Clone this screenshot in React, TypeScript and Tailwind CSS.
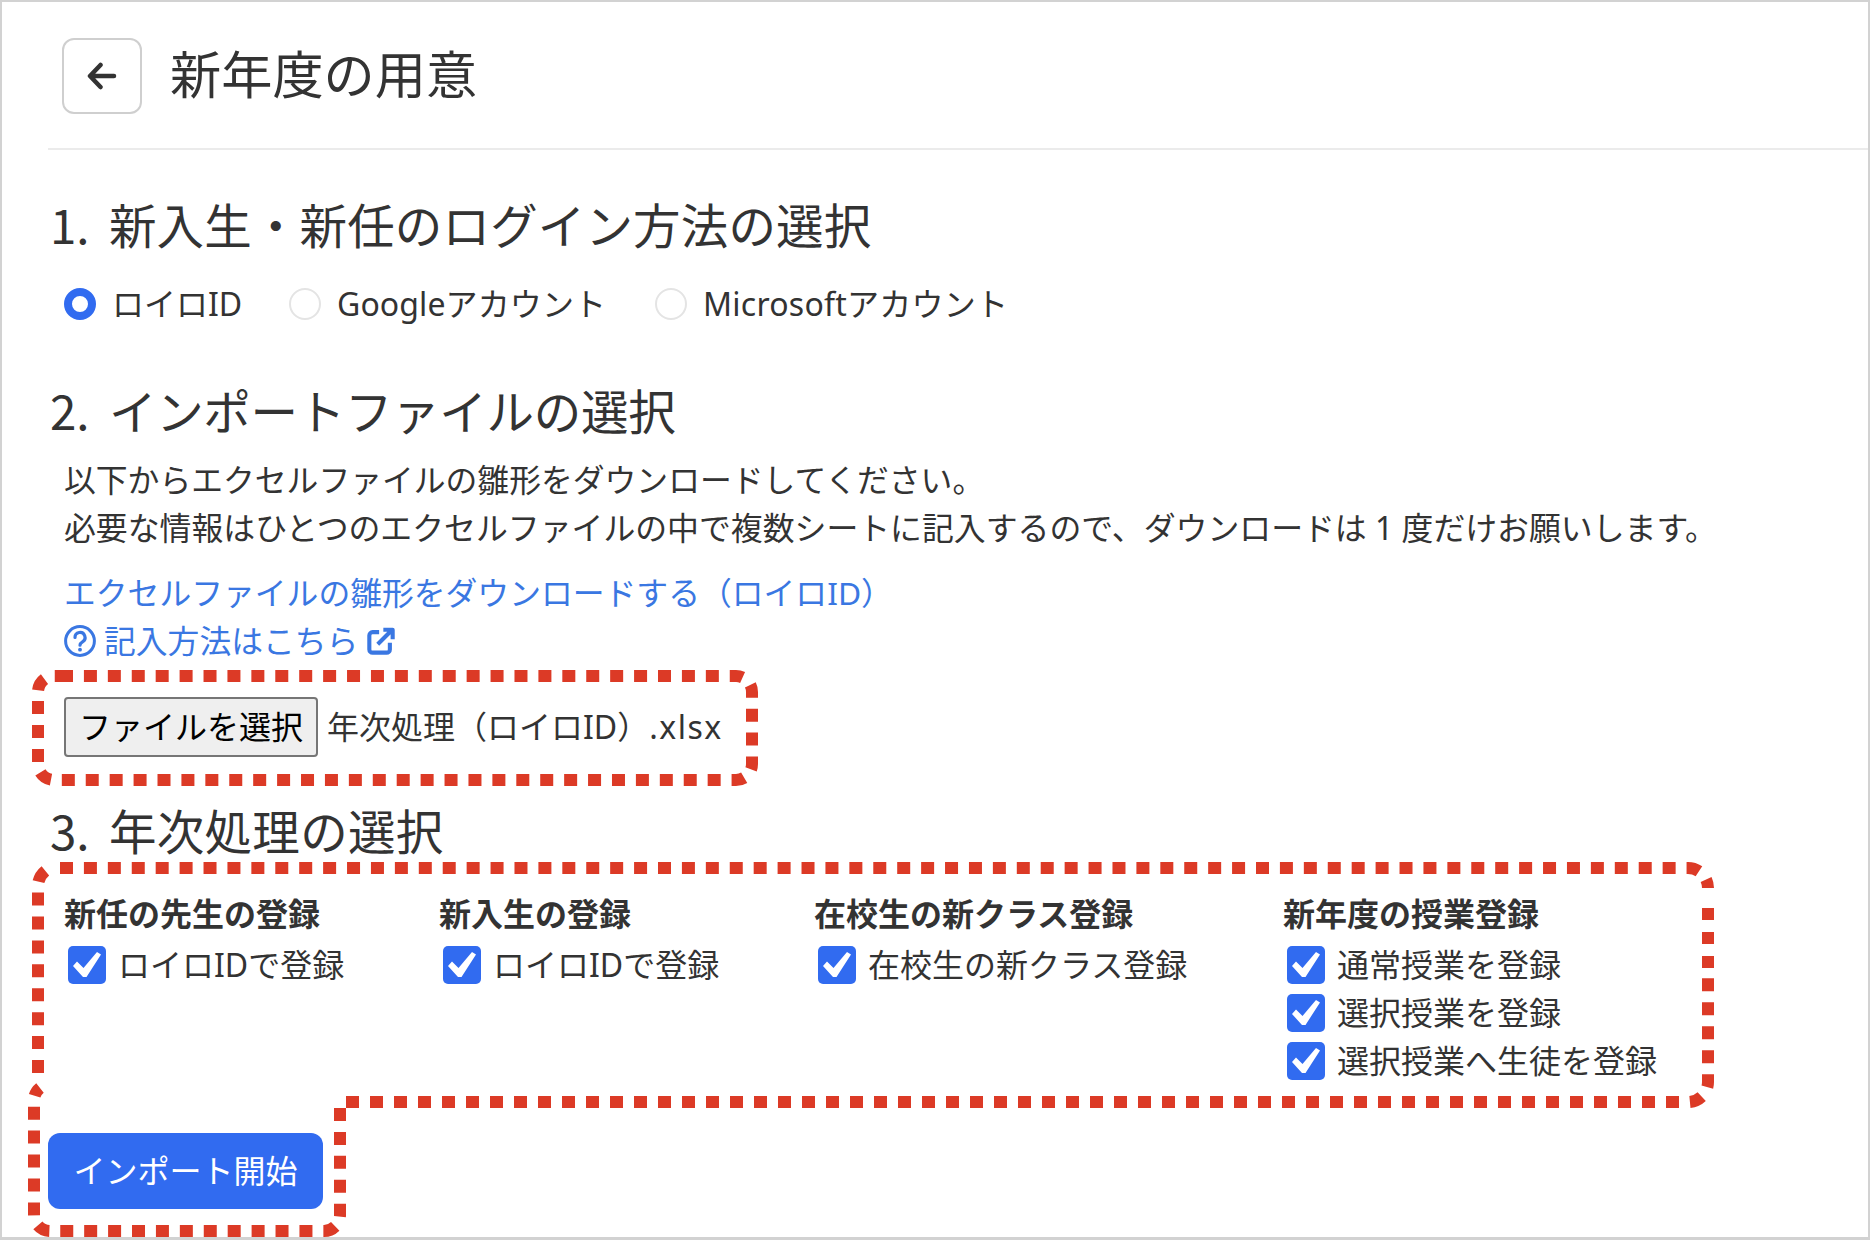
const font = { fontFamily: '"Noto Sans", "Noto Sans CJK JP", sans-serif' };
const numFont = { fontFamily: '"Noto Sans CJK JP", "Noto Sans", sans-serif' };

function Radio({ on, label, className, labelClass }: { on?: boolean; label: string; className: string; labelClass?: string }) {
  return (
    <div className={`flex items-center ${className}`}>
      {on ? (
        <span className="block w-8 h-8 rounded-full border-[8px] border-[#316bf0] bg-white" />
      ) : (
        <span className="block w-8 h-8 rounded-full border-2 border-[#e4e4e4] bg-white" />
      )}
      <span className={`ml-[16px] ${labelClass ?? ""}`}>{label}</span>
    </div>
  );
}

function Check({ label }: { label: string }) {
  return (
    <div className="flex items-center h-12 pl-1">
      <span className="flex items-center justify-center w-[38px] h-[38px] rounded-[5px] bg-[#316bf0]">
        <svg viewBox="0 0 38 38" className="w-[38px] h-[38px]">
          <path d="M5 20 L9 15.5 L15.5 22 L29 6 L33 8.5 L18.5 31 L15 31 Z" fill="#fff" />
        </svg>
      </span>
      <span className="ml-[12px]">{label}</span>
    </div>
  );
}

function Col({ title, items, width }: { title: string; items: string[]; width: string }) {
  return (
    <div className={`shrink-0 ${width}`}>
      <div className="h-12 leading-[48px] font-bold mb-[3px]">{title}</div>
      {items.map((t) => (
        <Check key={t} label={t} />
      ))}
    </div>
  );
}

function Heading({ num, text, className, textClass }: { num: string; text: string; className: string; textClass: string }) {
  return (
    <h2 className={`h-16 text-[47.5px] leading-[60px] ${className}`}>
      <span style={numFont} className="inline-block mr-[7px]">{num}</span> <span className={textClass}>{text}</span>
    </h2>
  );
}

export default function App() {
  return (
    <div
      style={font}
      className="relative w-[1870px] h-[1240px] overflow-hidden bg-white border-2 border-b-[3px] border-[#d2d2d2] text-[32px] text-[#333333]"
    >
      <div className="ml-[46px] pt-[36px] pb-[34px] flex items-center border-b-2 border-[#ebebeb]">
        <button className="ml-[14px] w-[80px] h-[76px] flex items-center justify-center rounded-[12px] border-2 border-[#cfcfcf] bg-white">
          <svg width="30" height="28" viewBox="0 0 30 28" fill="none" stroke="#333" strokeWidth="4.5" strokeLinecap="round" strokeLinejoin="round">
            <path d="M27 14 H3.5 M13.5 3 L3 14 L13.5 25" />
          </svg>
        </button>
        <h1 className="ml-[28px] -mt-[5px] text-[51.2px] leading-[76px]">新年度の用意</h1>
      </div>

      <div className="pl-[48px]">
        <Heading className="mt-[44px]" num="1." text="新入生・新任のログイン方法の選択" textClass="tracking-[0.15px]" />
        <div className="mt-[22px] h-12 flex items-center pl-[14px]">
          <Radio on label="ロイロID" className="w-[225px]" />
          <Radio label="Googleアカウント" className="w-[366px]" labelClass="tracking-[0.1px]" />
          <Radio label="Microsoftアカウント" className="" labelClass="tracking-[0.25px]" />
        </div>

        <Heading className="mt-[52px]" num="2." text="インポートファイルの選択" textClass="tracking-[-0.3px]" />
        <div className="mt-[12px] pl-[14px] leading-[48px] text-[31.8px]">
          <p>以下からエクセルファイルの雛形をダウンロードしてください。</p>
          <p className="text-[31.87px]">必要な情報はひとつのエクセルファイルの中で複数シートに記入するので、ダウンロードは 1 度だけお願いします。</p>
        </div>
        <div className="mt-[17px] pl-[14px] leading-[48px] text-[31.8px] text-[#3a77e2]">
          <p>エクセルファイルの雛形をダウンロードする（ロイロID）</p>
          <p className="flex items-center">
            <svg width="32" height="32" viewBox="0 0 32 32" fill="none" stroke="#3a77e2" strokeWidth="3" strokeLinecap="round" className="shrink-0">
              <circle cx="16" cy="16" r="14.4" />
              <path d="M11 12.5 a5 5 0 1 1 7.5 4.3 c-1.6 1 -2.5 1.8 -2.5 3.4" strokeWidth="3.2" />
              <path d="M16 24.6 v0.1" strokeWidth="3.8" />
            </svg>
            <span className="ml-[8px]">記入方法はこちら</span>
            <svg width="28" height="28" viewBox="0 0 30 30" fill="none" stroke="#3a77e2" strokeWidth="4.4" strokeLinejoin="round" className="ml-[9px] shrink-0">
              <path d="M13 5.5 H6 a3.5 3.5 0 0 0 -3.5 3.5 V24 a3.5 3.5 0 0 0 3.5 3.5 H21 a3.5 3.5 0 0 0 3.5 -3.5 V17" />
              <path d="M11.5 18.5 L27 3 M17.5 3 H27.5 V13" />
            </svg>
          </p>
        </div>

        <div className="mt-[32px] pl-[14px] flex items-center h-[60px]">
          <button className="w-[254px] h-[60px] rounded-[4px] border-2 border-[#767676] bg-[#efefef] text-black">
            ファイルを選択
          </button>
          <span className="ml-[9px]">
            年次処理（ロイロID）<span className="tracking-[1.5px]">.xlsx</span>
          </span>
        </div>

        <Heading className="mt-[43px]" num="3." text="年次処理の選択" textClass="tracking-[0.3px]" />
        <div className="mt-[26px] pl-[14px] flex">
          <Col width="w-[375px]" title="新任の先生の登録" items={["ロイロIDで登録"]} />
          <Col width="w-[375px]" title="新入生の登録" items={["ロイロIDで登録"]} />
          <Col width="w-[469px]" title="在校生の新クラス登録" items={["在校生の新クラス登録"]} />
          <Col width="w-[420px]" title="新年度の授業登録" items={["通常授業を登録", "選択授業を登録", "選択授業へ生徒を登録"]} />
        </div>
        <button className="mt-[48px] -ml-[2px] block w-[275px] h-[76px] rounded-[12px] bg-[#316bf0] text-white">
          インポート開始
        </button>
      </div>

      <svg className="absolute -left-[2px] -top-[2px] pointer-events-none" width="1870" height="1240" fill="none" stroke="#dc3a26" strokeWidth="12">
        <path d="M60 676 H736 a16 16 0 0 1 16 16 V764 a16 16 0 0 1 -16 16 H54 a16 16 0 0 1 -16 -16 V692 a16 16 0 0 1 16 -16 Z" strokeDasharray="13 10.92" />
        <path d="M60 868 H1688 a20 20 0 0 1 20 20" strokeDasharray="13 10.92" />
        <path d="M1708 908 V970" strokeDasharray="12 12" />
        <path d="M346 1102 H1688 a20 20 0 0 0 20 -20 V978" strokeDasharray="13 11" />
        <path d="M38 1073 V888 a20 20 0 0 1 12 -20" strokeDasharray="13 10.92" />
        <path d="M340 1108 V1215 a16 16 0 0 1 -16 16 H50 a16 16 0 0 1 -16 -16 V1102 a16 16 0 0 1 6 -14" strokeDasharray="13 10.92" />
      </svg>
    </div>
  );
}
